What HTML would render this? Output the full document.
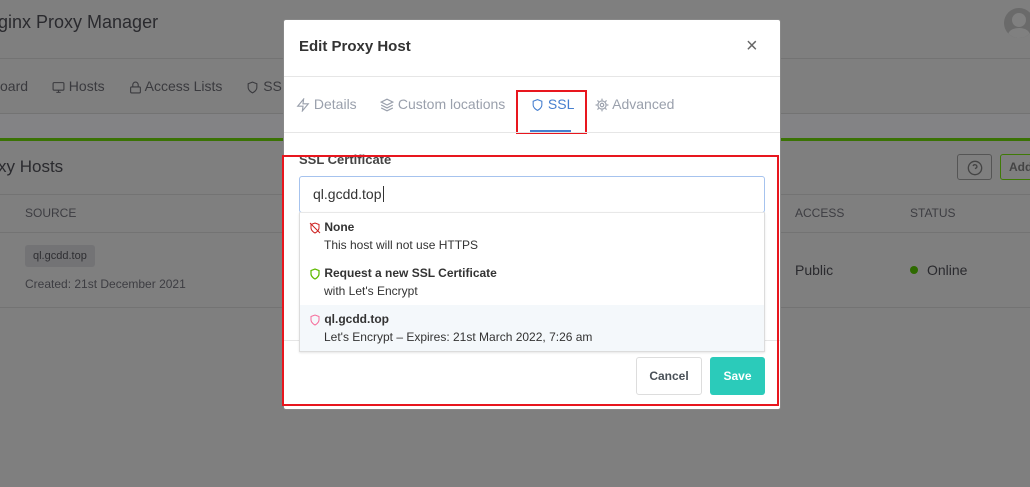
<!DOCTYPE html>
<html><head><style>
*{box-sizing:border-box;margin:0;padding:0}
body{width:1030px;height:487px;overflow:hidden;background:#7f7f7f;font-family:"Liberation Sans",sans-serif;position:relative;color:#222}
.a{position:absolute}
.dim{color:#2a2a2e}
.line{position:absolute;left:0;height:1px;background:#737373}
svg{display:inline-block;vertical-align:middle}
</style></head><body>
<div class="a dim" style="left:-2px;top:12px;font-size:18px">ginx Proxy Manager</div>
<div class="a" style="left:1004px;top:8px;width:30px;height:30px;border-radius:50%;background:#6a6a6a;overflow:hidden"><div style="position:absolute;left:8px;top:5px;width:14px;height:14px;border-radius:50%;background:#808080"></div><div style="position:absolute;left:4px;top:20px;width:22px;height:14px;border-radius:50%;background:#808080"></div></div>
<div class="line" style="top:58px;width:1030px"></div>
<div class="a" style="top:78px;left:0;font-size:14px;color:#3a3a3e;white-space:nowrap">oard
<span style="margin-left:20px"><svg width="13" height="13" viewBox="0 0 24 24" fill="none" stroke="#3a3a3e" stroke-width="2"><rect x="2" y="3" width="20" height="14" rx="2"/><path d="M8 21h8M12 17v4"/></svg> Hosts</span>
<span style="margin-left:20px"><svg width="13" height="13" viewBox="0 0 24 24" fill="none" stroke="#3a3a3e" stroke-width="2"><rect x="3" y="11" width="18" height="11" rx="2"/><path d="M7 11V7a5 5 0 0110 0v4"/></svg> Access Lists</span>
<span style="margin-left:20px"><svg width="13" height="13" viewBox="0 0 24 24" fill="none" stroke="#3a3a3e" stroke-width="2"><path d="M12 22s8-4 8-10V5l-8-3-8 3v7c0 6 8 10 8 10z"/></svg> SSL</span></div>
<div class="line" style="top:113px;width:1030px"></div>
<div class="a" style="top:114px;left:0;width:1030px;height:24px;background:#838385"></div>
<div class="a" style="top:138px;left:0;width:1030px;height:3px;background:#3a7204"></div>
<div class="a dim" style="left:-2px;top:157px;font-size:17px">xy Hosts</div>
<div class="a" style="left:957px;top:154px;width:35px;height:26px;border:1px solid #555;border-radius:3px;text-align:center;line-height:24px;font-size:13px;color:#444"><svg width="16" height="16" viewBox="0 0 24 24" fill="none" stroke="#444" stroke-width="2"><circle cx="12" cy="12" r="10"/><path d="M9.1 9a3 3 0 015.8 1c0 2-3 3-3 3M12 17h.01"/></svg></div>
<div class="a" style="left:1000px;top:154px;width:40px;height:26px;border:1px solid #3f7a06;border-radius:3px;padding-left:8px;line-height:24px;font-size:12px;font-weight:bold;color:#444">Add</div>
<div class="line" style="top:194px;width:1030px"></div>
<div class="a" style="left:25px;top:206px;font-size:12px;color:#3d3d42">SOURCE</div>
<div class="a" style="left:795px;top:206px;font-size:12px;color:#3d3d42">ACCESS</div>
<div class="a" style="left:910px;top:206px;font-size:12px;color:#3d3d42">STATUS</div>
<div class="line" style="top:232px;width:1030px"></div>
<div class="a" style="left:25px;top:245px;height:22px;padding:0 8px;background:#737375;border-radius:3px;font-size:11px;line-height:22px;color:#2e2e32">ql.gcdd.top</div>
<div class="a" style="left:25px;top:277px;font-size:12px;color:#3d3d42">Created: 21st December 2021</div>
<div class="a dim" style="left:795px;top:262px;font-size:14px">Public</div>
<div class="a" style="left:910px;top:266px;width:8px;height:8px;border-radius:50%;background:#2e6a00"></div>
<div class="a dim" style="left:927px;top:262px;font-size:14px">Online</div>
<div class="line" style="top:307px;width:1030px"></div>

<div class="a" style="left:283px;top:19px;width:498px;height:391px;background:#fff;border-radius:3px;border:1px solid #888"></div>
<div class="a" style="left:299px;top:38px;font-size:15px;font-weight:bold;color:#333">Edit Proxy Host</div>
<div class="a" style="left:746px;top:35px;font-size:20px;color:#666">×</div>
<div class="a" style="left:284px;top:76px;width:496px;height:1px;background:#e6e6e6"></div>
<div class="a" style="left:296px;top:96px;font-size:14px;color:#9aa0ac;white-space:nowrap">
<svg width="14" height="14" viewBox="0 0 24 24" fill="none" stroke="#9aa0ac" stroke-width="2"><path d="M13 2L3 14h9l-1 8 10-12h-9l1-8z"/></svg> Details</div>
<div class="a" style="left:380px;top:96px;font-size:14px;color:#9aa0ac;white-space:nowrap">
<svg width="14" height="14" viewBox="0 0 24 24" fill="none" stroke="#9aa0ac" stroke-width="2"><path d="M12 2L2 7l10 5 10-5-10-5zM2 17l10 5 10-5M2 12l10 5 10-5"/></svg> Custom locations</div>
<div class="a" style="left:531px;top:96px;font-size:14px;color:#467fcf;white-space:nowrap">
<svg width="13" height="14" viewBox="0 0 24 24" fill="none" stroke="#467fcf" stroke-width="2"><path d="M12 22s8-4 8-10V5l-8-3-8 3v7c0 6 8 10 8 10z"/></svg> SSL</div>
<div class="a" style="left:530px;top:130px;width:41px;height:2px;background:#467fcf"></div>
<div class="a" style="left:516px;top:90px;width:71px;height:44px;border:2px solid #e8161e"></div>
<div class="a" style="left:595px;top:96px;font-size:14px;color:#9aa0ac;white-space:nowrap">
<svg width="14" height="14" viewBox="0 0 24 24" fill="none" stroke="#9aa0ac" stroke-width="2"><circle cx="12" cy="12" r="3"/><path d="M12 1v3M12 20v3M4.2 4.2l2.1 2.1M17.7 17.7l2.1 2.1M1 12h3M20 12h3M4.2 19.8l2.1-2.1M17.7 6.3l2.1-2.1"/><circle cx="12" cy="12" r="7"/></svg> Advanced</div>
<div class="a" style="left:284px;top:132px;width:496px;height:1px;background:#e6e6e6"></div>
<div class="a" style="left:299px;top:152px;font-size:13px;font-weight:bold;color:#444">SSL Certificate</div>
<div class="a" style="left:299px;top:176px;width:466px;height:37px;border:1px solid #a6c3ee;border-radius:3px;padding-left:13px;line-height:35px;font-size:14px;color:#333">ql.gcdd.top<span style="border-left:1px solid #333;margin-left:1px"></span></div>
<div class="a" style="left:284px;top:340px;width:496px;height:1px;background:#e6e6e6"></div>
<div class="a" style="left:299px;top:212px;width:466px;height:140px;background:#fff;border:1px solid #dcdcdc;border-top:1px solid #e8e8e8;box-shadow:0 1px 2px rgba(0,0,0,.1)"></div>
<div class="a" style="left:300px;top:305px;width:464px;height:46px;background:#f4f8fb"></div>
<div class="a" style="left:309px;top:218px;font-size:12px;line-height:18px;color:#333">
<div><svg width="12" height="12" viewBox="0 0 24 24" fill="none" stroke="#cd201f" stroke-width="2"><path d="M12 22s8-4 8-10V5l-8-3-8 3v7c0 6 8 10 8 10zM2 2l20 20"/></svg> <b>None</b></div>
<div style="padding-left:15px">This host will not use HTTPS</div>
<div style="margin-top:10px"><svg width="12" height="12" viewBox="0 0 24 24" fill="none" stroke="#5eba00" stroke-width="2.5"><path d="M12 22s8-4 8-10V5l-8-3-8 3v7c0 6 8 10 8 10z"/></svg> <b>Request a new SSL Certificate</b></div>
<div style="padding-left:15px">with Let's Encrypt</div>
<div style="margin-top:10px"><svg width="12" height="12" viewBox="0 0 24 24" fill="none" stroke="#f66d9b" stroke-width="2"><path d="M12 22s8-4 8-10V5l-8-3-8 3v7c0 6 8 10 8 10z"/></svg> <b>ql.gcdd.top</b></div>
<div style="padding-left:15px">Let's Encrypt – Expires: 21st March 2022, 7:26 am</div>
</div>
<div class="a" style="left:636px;top:357px;width:66px;height:38px;border:1px solid #ddd;border-radius:3px;text-align:center;line-height:36px;font-size:12px;font-weight:bold;color:#495057">Cancel</div>
<div class="a" style="left:710px;top:357px;width:55px;height:38px;background:#2bcbba;border-radius:3px;text-align:center;line-height:38px;font-size:12px;font-weight:bold;color:#fff">Save</div>
<div class="a" style="left:282px;top:155px;width:497px;height:251px;border:2px solid #e8161e"></div>
</body></html>
